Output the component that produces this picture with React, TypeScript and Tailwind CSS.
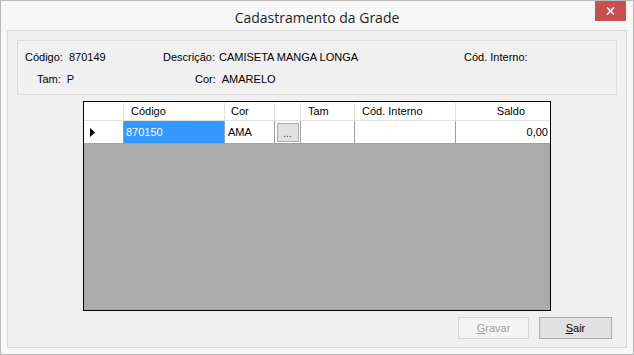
import React from "react";

export default function App() {
  const font = { fontFamily: '"Liberation Sans", Arial, sans-serif' };
  return (
    <div
      className="w-[634px] h-[355px] bg-[#f7f7f7] border border-[#b9b9b9] flex flex-col text-[11px] text-black overflow-hidden"
      style={font}
    >
      {/* Title bar */}
      <div className="relative h-[29px] shrink-0 flex items-center justify-center">
        <span className="text-[14px] text-[#1e1e1e] pt-[3px]" style={{ fontFamily: '"Open Sans", "Liberation Sans", sans-serif' }}>
          Cadastramento da Grade
        </span>
        <div className="absolute right-[7px] top-[-1px] w-[31px] h-[21px] bg-[#c75050] flex items-center justify-center">
          <svg width="9" height="8" viewBox="0 0 9 8">
            <path d="M1 0.5 L8 7.5 M8 0.5 L1 7.5" stroke="white" strokeWidth="1.6" />
          </svg>
        </div>
      </div>
      {/* Client */}
      <div className="flex-1 px-[6px] pb-[6px] flex">
        <div className="flex-1 bg-[#f0f0f0] border border-[#d9d9d9] flex flex-col">
          {/* Info group */}
          <div className="mx-[9px] mt-[9px] h-[55px] border border-[#dcdcdc] relative">
            <div className="absolute left-[7px] top-[8px] flex">
              <span>Código:</span>
              <span className="ml-[6px]">870149</span>
            </div>
            <div className="absolute left-[145px] top-[8px] flex">
              <span>Descrição:</span>
              <span className="ml-[4px]">CAMISETA MANGA LONGA</span>
            </div>
            <div className="absolute left-[446px] top-[8px]">Cód. Interno:</div>
            <div className="absolute left-[19px] top-[30px] flex">
              <span>Tam:</span>
              <span className="ml-[6px]">P</span>
            </div>
            <div className="absolute left-[177px] top-[30px] flex">
              <span>Cor:</span>
              <span className="ml-[6px]">AMARELO</span>
            </div>
          </div>
          {/* Grid */}
          <div className="ml-[75px] mt-[6px] w-[468px] h-[210px] border border-black bg-[#ababab] flex flex-col">
            <div className="h-[19px] bg-white flex border-b border-[#e3e3e3]">
              <div className="w-[40px] border-r border-[#e3e3e3]" />
              <div className="w-[101px] border-r border-[#e3e3e3] pl-[7px] leading-[19px]">Código</div>
              <div className="w-[50px] border-r border-[#e3e3e3] pl-[6px] leading-[19px]">Cor</div>
              <div className="w-[26px] border-r border-[#e3e3e3]" />
              <div className="w-[54px] border-r border-[#e3e3e3] pl-[7px] leading-[19px]">Tam</div>
              <div className="w-[101px] border-r border-[#e3e3e3] pl-[7px] leading-[19px]">Cód. Interno</div>
              <div className="flex-1 text-right pr-[25px] leading-[19px]">Saldo</div>
            </div>
            <div className="h-[23px] bg-white flex border-b border-[#a0a0a0]">
              <div className="w-[40px] border-r border-[#a0a0a0] flex items-center pl-[6px]">
                <svg width="5" height="9" viewBox="0 0 5 9">
                  <path d="M0 0 L5 4.5 L0 9 Z" fill="black" />
                </svg>
              </div>
              <div className="w-[101px] border-r border-[#a0a0a0] bg-[#3399ff] text-white pl-[2px] leading-[22px]">870150</div>
              <div className="w-[50px] border-r border-[#a0a0a0] pl-[3px] leading-[22px]">AMA</div>
              <div className="w-[26px] border-r border-[#a0a0a0] flex items-center justify-center">
                <div className="w-[22px] h-[19px] bg-[#e1e1e1] border border-[#adadad] flex items-end justify-center text-[10px] leading-[14px] text-[#333]">
                  ...
                </div>
              </div>
              <div className="w-[54px] border-r border-[#a0a0a0]" />
              <div className="w-[101px] border-r border-[#a0a0a0]" />
              <div className="flex-1 text-right pr-[2px] leading-[22px]">0,00</div>
            </div>
          </div>
          {/* Buttons */}
          <div className="flex justify-end gap-[10px] mr-[14px] mt-[6px]">
            <div className="w-[71px] h-[22px] border border-[#d6d6d6] bg-[#f4f4f4] flex items-center justify-center text-[#a0a0a0]">
              <span><span className="underline">G</span>ravar</span>
            </div>
            <div className="w-[73px] h-[22px] border border-[#adadad] bg-[#e1e1e1] flex items-center justify-center">
              <span><span className="underline">S</span>air</span>
            </div>
          </div>
        </div>
      </div>
    </div>
  );
}
